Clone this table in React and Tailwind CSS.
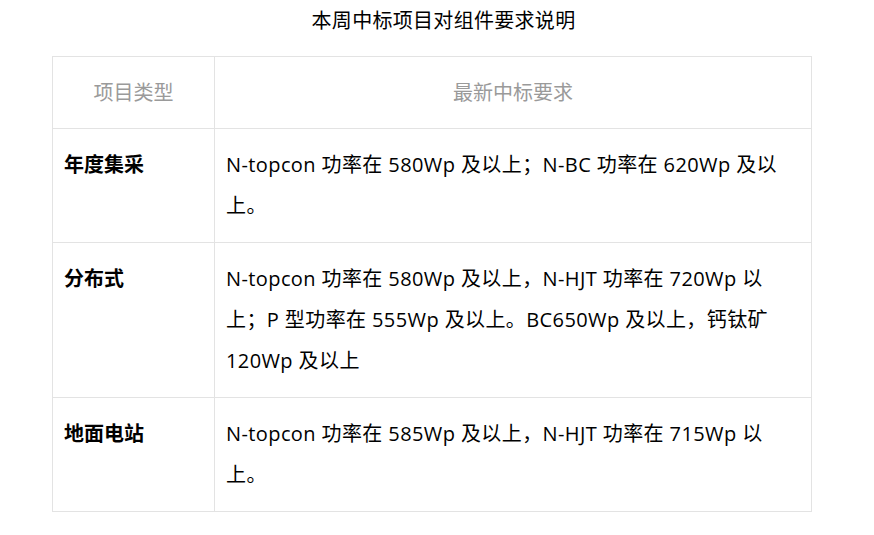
import React from 'react';

const ROWS = [
  {
    type: '年度集采',
    lines: ['N-topcon 功率在 580Wp 及以上；N-BC 功率在 620Wp 及以', '上。'],
  },
  {
    type: '分布式',
    lines: [
      'N-topcon 功率在 580Wp 及以上，N-HJT 功率在 720Wp 以',
      '上；P 型功率在 555Wp 及以上。BC650Wp 及以上，钙钛矿',
      '120Wp 及以上',
    ],
  },
  {
    type: '地面电站',
    lines: ['N-topcon 功率在 585Wp 及以上，N-HJT 功率在 715Wp 以', '上。'],
  },
];

export default function App() {
  return (
    <div
      className="min-h-[535px] bg-white pt-[8px] text-black"
      style={{ fontFamily: '"Open Sans", "Noto Sans CJK SC", sans-serif' }}
    >
      <h1 className="pl-[13px] text-center text-[20px] leading-[26px] font-normal tracking-[0.3px]">本周中标项目对组件要求说明</h1>
      <div className="pl-[52px] pt-[22px]">
        <table className="w-[760px] table-fixed border-collapse text-[20px]">
          <colgroup>
            <col className="w-[162px]" />
            <col />
          </colgroup>
          <thead>
            <tr className="h-[72px]">
              <th className="border border-[#e3e3e3] font-normal text-[#9a9a9a] text-center">项目类型</th>
              <th className="border border-[#e3e3e3] font-normal text-[#9a9a9a] text-center">最新中标要求</th>
            </tr>
          </thead>
          <tbody>
            {ROWS.map((r) => (
              <tr key={r.type}>
                <td className="border border-[#e3e3e3] align-top pl-[11px] pt-[15px] pb-[16px] font-bold leading-[41px]">
                  {r.type}
                </td>
                <td className="border border-[#e3e3e3] align-top pl-[11px] pt-[15px] pb-[16px] leading-[41px] whitespace-nowrap tracking-[0.4px]">
                  {r.lines.map((l, i) => (
                    <div key={i}>{l}</div>
                  ))}
                </td>
              </tr>
            ))}
          </tbody>
        </table>
      </div>
    </div>
  );
}
